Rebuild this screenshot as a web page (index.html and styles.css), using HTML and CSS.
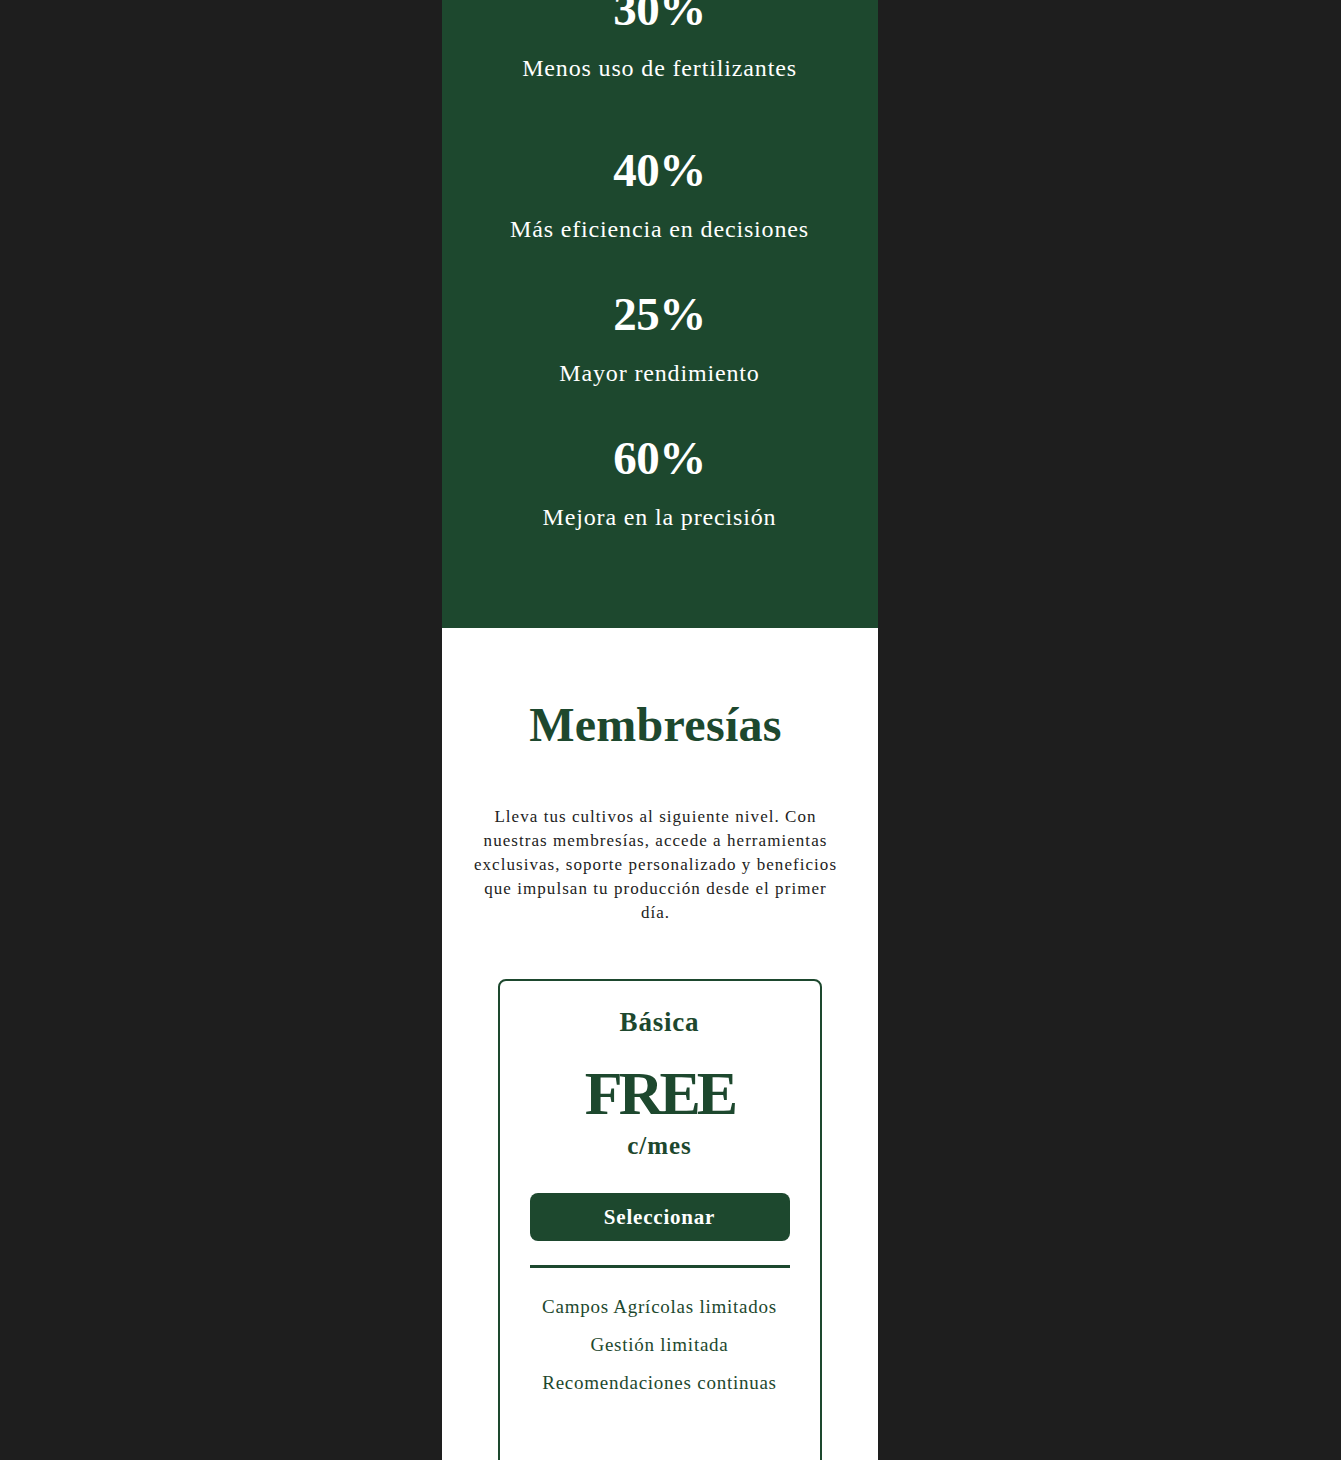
FILE: index.html
```html
<!DOCTYPE html>
<html lang="es">
<head>
<meta charset="utf-8">
<title>Membresías</title>
<link rel="stylesheet" href="styles.css">
</head>
<body>
<main class="page">
  <section class="stats">
    <div class="stat stat-first">
      <div class="stat-num">30%</div>
      <div class="stat-label">Menos uso de fertilizantes</div>
    </div>
    <div class="stat">
      <div class="stat-num">40%</div>
      <div class="stat-label">Más eficiencia en decisiones</div>
    </div>
    <div class="stat">
      <div class="stat-num">25%</div>
      <div class="stat-label">Mayor rendimiento</div>
    </div>
    <div class="stat">
      <div class="stat-num">60%</div>
      <div class="stat-label">Mejora en la precisión</div>
    </div>
  </section>
  <section class="plans">
    <h2 class="plans-title">Membresías</h2>
    <p class="plans-intro">Lleva tus cultivos al siguiente nivel. Con nuestras membresías, accede a herramientas exclusivas, soporte personalizado y beneficios que impulsan tu producción desde el primer día.</p>
    <div class="card">
      <h3 class="card-name">Básica</h3>
      <div class="card-price">FREE</div>
      <div class="card-period">c/mes</div>
      <button class="card-btn">Seleccionar</button>
      <hr class="card-rule">
      <ul class="card-features">
        <li>Campos Agrícolas limitados</li>
        <li>Gestión limitada</li>
        <li>Recomendaciones continuas</li>
      </ul>
    </div>
  </section>
</main>
</body>
</html>
```

FILE: styles.css
```css
html, body {
  margin: 0;
  padding: 0;
  background: #1e1e1e;
}
body {
  padding-right: 22px;
  font-family: "Liberation Serif", "Times New Roman", serif;
}
.page {
  width: 436px;
  margin: 0 auto;
}
.stats {
  background: #1d482e;
  color: #ffffff;
  margin-top: -59px;
  padding: 40px 0 95px;
  display: flex;
  flex-direction: column;
  gap: 41px;
}
.stat {
  display: flex;
  flex-direction: column;
  align-items: center;
  gap: 15px;
}
.stat-first {
  margin-bottom: 17px;
}
.stat-num {
  font-size: 47px;
  line-height: 56px;
  font-weight: bold;
  letter-spacing: -0.5px;
}
.stat-label {
  font-size: 24px;
  line-height: 32px;
  letter-spacing: 0.85px;
}
.plans {
  background: #ffffff;
  padding: 69px 0 60px;
  display: flex;
  flex-direction: column;
  align-items: center;
}
.plans-title {
  margin: 0;
  padding-right: 8px;
  font-size: 48px;
  line-height: 56px;
  font-weight: bold;
  letter-spacing: 0.3px;
  color: #1d482e;
}
.plans-intro {
  margin: 52px 0 0;
  padding: 0 38px 0 30px;
  font-size: 17px;
  line-height: 24px;
  letter-spacing: 1.05px;
  color: #222222;
  text-align: center;
}
.card {
  margin-top: 54px;
  width: 260px;
  padding: 25px 30px 90px;
  border: 2px solid #1d482e;
  border-radius: 8px;
  display: flex;
  flex-direction: column;
  align-items: center;
  color: #1d482e;
}
.card-name {
  margin: 0;
  font-size: 27px;
  line-height: 32px;
  font-weight: bold;
  letter-spacing: 0.8px;
}
.card-price {
  margin-top: 19px;
  font-size: 62px;
  line-height: 72px;
  font-weight: bold;
  letter-spacing: -4px;
}
.card-period {
  margin-top: 2px;
  font-size: 25px;
  line-height: 30px;
  font-weight: bold;
  letter-spacing: 1px;
}
.card-btn {
  margin-top: 32px;
  width: 100%;
  height: 48px;
  border: 0;
  border-radius: 8px;
  background: #1d482e;
  color: #ffffff;
  font-family: inherit;
  font-size: 21px;
  font-weight: bold;
  letter-spacing: 0.8px;
}
.card-rule {
  margin: 24px 0 0;
  width: 100%;
  border: 0;
  height: 3px;
  background: #1d482e;
}
.card-features {
  list-style: none;
  margin: 20px 0 0;
  padding: 0;
  text-align: center;
  font-size: 19px;
  line-height: 38px;
  letter-spacing: 0.75px;
}
```
